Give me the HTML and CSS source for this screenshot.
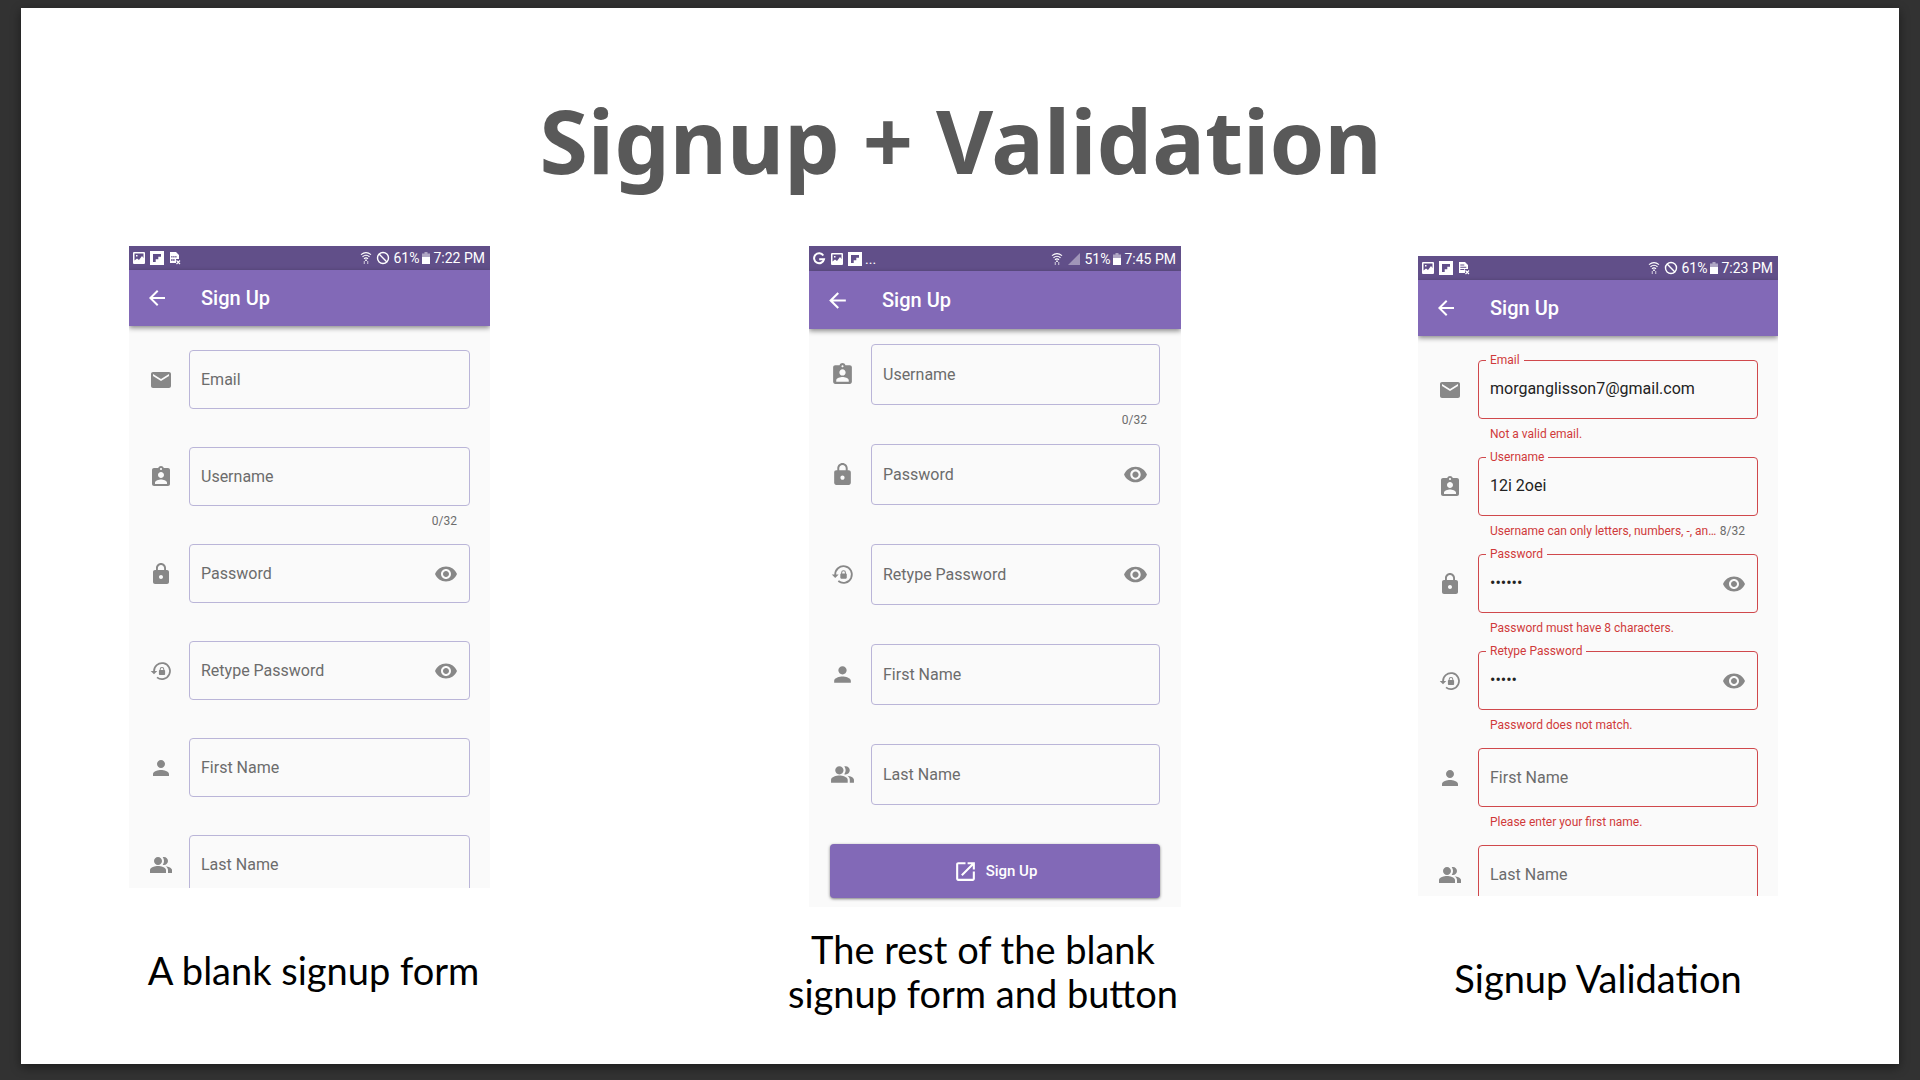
FILE: index.html
```html
<!DOCTYPE html>
<html lang="en">
<head>
<meta charset="utf-8">
<title>Signup + Validation</title>
<link rel="stylesheet" href="styles.css">
</head>
<body>
<svg class="sprite" aria-hidden="true">
  <symbol id="i-back" viewBox="0 0 24 24"><path d="M20 11H7.83l5.59-5.59L12 4l-8 8 8 8 1.41-1.41L7.83 13H20v-2z"/></symbol>
  <symbol id="i-email" viewBox="0 0 24 24"><path d="M20 4H4c-1.100 0-1.990.9-1.990 2L2 18c0 1.100.9 2 2 2h16c1.100 0 2-.9 2-2V6c0-1.100-.9-2-2-2zm0 4l-8 5-8-5V6l8 5 8-5v2z"/></symbol>
  <symbol id="i-badge" viewBox="0 0 24 24"><path d="M19 3h-4.180C14.400 1.840 13.300 1 12 1c-1.300 0-2.400.84-2.820 2H5c-1.100 0-2 .9-2 2v14c0 1.100.9 2 2 2h14c1.100 0 2-.9 2-2V5c0-1.100-.9-2-2-2zm-7 0c.55 0 1 .45 1 1s-.45 1-1 1-1-.45-1-1 .45-1 1-1zm0 4c1.660 0 3 1.340 3 3s-1.340 3-3 3-3-1.340-3-3 1.340-3 3-3zm6 12H6v-1.400c0-2 4-3.100 6-3.100s6 1.100 6 3.100V19z"/></symbol>
  <symbol id="i-lock" viewBox="0 0 24 24"><path d="M18 8h-1V6c0-2.760-2.240-5-5-5S7 3.240 7 6v2H6c-1.100 0-2 .9-2 2v10c0 1.100.9 2 2 2h12c1.100 0 2-.9 2-2V10c0-1.100-.9-2-2-2zm-6 9c-1.100 0-2-.9-2-2s.9-2 2-2 2 .9 2 2-.9 2-2 2zm3.100-9H8.900V6c0-1.710 1.390-3.100 3.100-3.100 1.710 0 3.100 1.390 3.100 3.100v2z"/></symbol>
  <symbol id="i-relock" viewBox="0 0 24 24"><path d="M5 12.500A8 8 0 1 1 8 18.300" fill="none" stroke="currentColor" stroke-width="1.700"/><path d="M1.700 12h6.600L5 15.300zM15.300 11v-.8a2.300 2.300 0 0 0-4.600 0v.8c-.5 0-.8.3-.8.8v3.400c0 .5.3.8.8.8h4.600c.5 0 .8-.3.8-.8v-3.400c0-.5-.3-.8-.8-.8zm-1 0h-2.600v-.8a1.300 1.300 0 0 1 2.600 0z"/></symbol>
  <symbol id="i-person" viewBox="0 0 24 24"><path d="M12 12c2.210 0 4-1.790 4-4s-1.790-4-4-4-4 1.790-4 4 1.790 4 4 4zm0 2c-2.670 0-8 1.340-8 4v2h16v-2c0-2.660-5.330-4-8-4z"/></symbol>
  <symbol id="i-people" viewBox="0 0 24 24"><path d="M16.670 13.130C18.040 14.060 19 15.320 19 17v3h4v-3c0-2.180-3.570-3.470-6.330-3.870zM15 12c2.210 0 4-1.790 4-4s-1.790-4-4-4c-.47 0-.91.1-1.330.24C14.500 5.270 15 6.580 15 8s-.5 2.730-1.330 3.760c.42.14.86.24 1.330.24zM9 12c2.210 0 4-1.790 4-4s-1.790-4-4-4-4 1.790-4 4 1.790 4 4 4zm0 1c-2.670 0-8 1.340-8 4v3h16v-3c0-2.660-5.330-4-8-4z"/></symbol>
  <symbol id="i-eye" viewBox="0 0 24 24"><path d="M12 4.500C7 4.500 2.730 7.610 1 12c1.730 4.390 6 7.500 11 7.500s9.270-3.110 11-7.500c-1.730-4.390-6-7.500-11-7.500zM12 17c-2.760 0-5-2.240-5-5s2.240-5 5-5 5 2.240 5 5-2.240 5-5 5zm0-8c-1.660 0-3 1.340-3 3s1.340 3 3 3 3-1.340 3-3-1.340-3-3-3z"/></symbol>
  <symbol id="i-open" viewBox="0 0 24 24"><path d="M19 19H5V5h7V3H5c-1.110 0-2 .9-2 2v14c0 1.100.89 2 2 2h14c1.100 0 2-.9 2-2v-7h-2v7zM14 3v2h3.590l-9.830 9.830 1.410 1.410L19 6.410V10h2V3h-7z"/></symbol>
  <symbol id="s-picture" viewBox="0 0 14 14"><path fill-rule="evenodd" d="M2 1h10q1 0 1 1v10q0 1-1 1H2q-1 0-1-1V2q0-1 1-1zm.5 1.500v7l2.500-2 2 1.500 3-4 1.500 2V2.500zM4 4h1.500v1.500H4z"/></symbol>
  <symbol id="s-flip" viewBox="0 0 14 14"><path fill-rule="evenodd" d="M0 0h14v14H0zM3 3v8h2.700V8.300h2.600V5.700H11V3z"/></symbol>
  <symbol id="s-sim" viewBox="0 0 14 14"><path fill-rule="evenodd" d="M2 1h6l3 3v4H8v4H2zm1.300 4v1.500h1.200V5zm2 0v1.500h1.200V5zm2 0v1.500h1.200V5zm-4 3v2h1.200V8zm2 0v2h1.200V8z"/><path d="M8.500 9.500l3.500 3.500m0-3.500L8.500 13" stroke="currentColor" stroke-width="1.200"/></symbol>
  <symbol id="s-doc" viewBox="0 0 14 14"><path fill-rule="evenodd" d="M2 1h6l3 3v4H8v4H2zm1.300 2.500v1h4v-1zm0 2.200v1h6v-1zm0 2.200v1h4v-1z"/><path d="M8.500 9.500l3.500 3.500m0-3.500L8.500 13" stroke="currentColor" stroke-width="1.200"/></symbol>
  <symbol id="s-google" viewBox="0 0 14 14"><path d="M11.300 3.500A5 5 0 1 0 12 7.300H7.200" fill="none" stroke="currentColor" stroke-width="2"/></symbol>
  <symbol id="s-wifi" viewBox="0 0 12 14"><g fill="none" stroke="currentColor" stroke-width="1.200"><path d="M1 3.600q5-4 10 0M2.500 5.700q3.500-2.900 7 0M4 7.700q2-1.800 4 0"/></g><path d="M5.200 8.500h1.600V10H5.200z"/><path d="M4.300 10v3M7.700 10v3" stroke="currentColor" stroke-width="1.200" opacity=".6"/></symbol>
  <symbol id="s-none" viewBox="0 0 14 14"><g fill="none" stroke="currentColor" stroke-width="1.400"><circle cx="7" cy="7" r="5.500"/><path d="M3.100 3.100l7.800 7.800"/></g></symbol>
  <symbol id="s-signal" viewBox="0 0 14 14"><path d="M13 1v12H1z" opacity=".4"/></symbol>
  <symbol id="s-battery" viewBox="0 0 8 14"><path d="M2.500 1h3v1.500H8V7H0V2.500h2.500z" opacity=".5"/><path d="M0 6h8v7H0z"/></symbol>
</svg>

<main class="slide">
  <h1 class="title">Signup + Validation</h1>
  <div class="shots">
    <figure class="shot shot-first">
      <section class="phone">
        <div class="status">
          <svg class="glyph"><use href="#s-picture"/></svg><svg class="glyph"><use href="#s-flip"/></svg><svg class="glyph"><use href="#s-sim"/></svg>
          <span class="spacer"></span>
          <svg class="glyph narrow"><use href="#s-wifi"/></svg><svg class="glyph"><use href="#s-none"/></svg><span>61%</span><svg class="glyph battery"><use href="#s-battery"/></svg><span>7:22 PM</span>
        </div>
        <header class="appbar"><button class="icon-button" type="button" aria-label="Back"><svg class="icon"><use href="#i-back"/></svg></button><h2 class="screen-title">Sign Up</h2></header>
        <form class="form">
          <div class="row"><svg class="icon"><use href="#i-email"/></svg><div class="field"><input id="a1" type="email"><label for="a1">Email</label></div></div>
          <div class="row"><svg class="icon"><use href="#i-badge"/></svg><div class="field"><input id="a2" type="text"><label for="a2">Username</label></div><div class="help"><span class="count">0/32</span></div></div>
          <div class="row"><svg class="icon"><use href="#i-lock"/></svg><div class="field"><input id="a3" type="password"><label for="a3">Password</label><button class="icon-button eye" type="button" aria-label="Show password"><svg class="icon"><use href="#i-eye"/></svg></button></div></div>
          <div class="row"><svg class="icon"><use href="#i-relock"/></svg><div class="field"><input id="a4" type="password"><label for="a4">Retype Password</label><button class="icon-button eye" type="button" aria-label="Show password"><svg class="icon"><use href="#i-eye"/></svg></button></div></div>
          <div class="row"><svg class="icon"><use href="#i-person"/></svg><div class="field"><input id="a5" type="text"><label for="a5">First Name</label></div></div>
          <div class="row"><svg class="icon"><use href="#i-people"/></svg><div class="field"><input id="a6" type="text"><label for="a6">Last Name</label></div></div>
        </form>
      </section>
      <figcaption class="caption">A blank signup form</figcaption>
    </figure>

    <figure class="shot shot-second">
      <section class="phone phone-large">
        <div class="status">
          <svg class="glyph"><use href="#s-google"/></svg><svg class="glyph"><use href="#s-picture"/></svg><svg class="glyph"><use href="#s-flip"/></svg><span>...</span>
          <span class="spacer"></span>
          <svg class="glyph narrow"><use href="#s-wifi"/></svg><svg class="glyph"><use href="#s-signal"/></svg><span>51%</span><svg class="glyph battery"><use href="#s-battery"/></svg><span>7:45 PM</span>
        </div>
        <header class="appbar"><button class="icon-button" type="button" aria-label="Back"><svg class="icon"><use href="#i-back"/></svg></button><h2 class="screen-title">Sign Up</h2></header>
        <form class="form">
          <div class="row"><svg class="icon"><use href="#i-badge"/></svg><div class="field"><input id="b1" type="text"><label for="b1">Username</label></div><div class="help"><span class="count">0/32</span></div></div>
          <div class="row"><svg class="icon"><use href="#i-lock"/></svg><div class="field"><input id="b2" type="password"><label for="b2">Password</label><button class="icon-button eye" type="button" aria-label="Show password"><svg class="icon"><use href="#i-eye"/></svg></button></div></div>
          <div class="row"><svg class="icon"><use href="#i-relock"/></svg><div class="field"><input id="b3" type="password"><label for="b3">Retype Password</label><button class="icon-button eye" type="button" aria-label="Show password"><svg class="icon"><use href="#i-eye"/></svg></button></div></div>
          <div class="row"><svg class="icon"><use href="#i-person"/></svg><div class="field"><input id="b4" type="text"><label for="b4">First Name</label></div></div>
          <div class="row"><svg class="icon"><use href="#i-people"/></svg><div class="field"><input id="b5" type="text"><label for="b5">Last Name</label></div></div>
          <button class="submit" type="button"><svg class="icon"><use href="#i-open"/></svg>Sign Up</button>
        </form>
      </section>
      <figcaption class="caption">The rest of the blank signup form and button</figcaption>
    </figure>

    <figure class="shot shot-third">
      <section class="phone">
        <div class="status">
          <svg class="glyph"><use href="#s-picture"/></svg><svg class="glyph"><use href="#s-flip"/></svg><svg class="glyph"><use href="#s-doc"/></svg>
          <span class="spacer"></span>
          <svg class="glyph narrow"><use href="#s-wifi"/></svg><svg class="glyph"><use href="#s-none"/></svg><span>61%</span><svg class="glyph battery"><use href="#s-battery"/></svg><span>7:23 PM</span>
        </div>
        <header class="appbar"><button class="icon-button" type="button" aria-label="Back"><svg class="icon"><use href="#i-back"/></svg></button><h2 class="screen-title">Sign Up</h2></header>
        <form class="form invalid">
          <div class="row"><svg class="icon"><use href="#i-email"/></svg><div class="field filled"><input id="c1" type="text" value="morganglisson7@gmail.com"><label for="c1">Email</label></div><div class="help"><span>Not a valid email.</span></div></div>
          <div class="row"><svg class="icon"><use href="#i-badge"/></svg><div class="field filled"><input id="c2" type="text" value="12i 2oei"><label for="c2">Username</label></div><div class="help"><span>Username can only letters, numbers, -, an…</span><span class="count">8/32</span></div></div>
          <div class="row"><svg class="icon"><use href="#i-lock"/></svg><div class="field filled"><input id="c3" type="password" value="secret"><label for="c3">Password</label><button class="icon-button eye" type="button" aria-label="Show password"><svg class="icon"><use href="#i-eye"/></svg></button></div><div class="help"><span>Password must have 8 characters.</span></div></div>
          <div class="row"><svg class="icon"><use href="#i-relock"/></svg><div class="field filled"><input id="c4" type="password" value="secre"><label for="c4">Retype Password</label><button class="icon-button eye" type="button" aria-label="Show password"><svg class="icon"><use href="#i-eye"/></svg></button></div><div class="help"><span>Password does not match.</span></div></div>
          <div class="row"><svg class="icon"><use href="#i-person"/></svg><div class="field"><input id="c5" type="text"><label for="c5">First Name</label></div><div class="help"><span>Please enter your first name.</span></div></div>
          <div class="row"><svg class="icon"><use href="#i-people"/></svg><div class="field"><input id="c6" type="text"><label for="c6">Last Name</label></div></div>
        </form>
      </section>
      <figcaption class="caption">Signup Validation</figcaption>
    </figure>
  </div>
</main>
</body>
</html>
```
FILE: styles.css
```css
* { box-sizing: border-box; }

body {
  margin: 0;
  min-height: 100vh;
  padding: 8px 21px 16px;
  display: flex;
  background: #323232;
  font-family: Roboto, sans-serif;
}

.sprite { display: none; }

.slide {
  flex: 1;
  padding: 72px 121px 0 108px;
  background: #fff;
  box-shadow: 0 3px 10px rgba(0, 0, 0, 0.45);
}

.title {
  margin: 0 0 46px 14px;
  font: bold 88px/120px "Noto Sans", "Open Sans", sans-serif;
  color: #595959;
  text-align: center;
}

.shots {
  display: grid;
  grid-template-columns: 361fr 319fr 372fr 237fr 360fr;
  align-items: start;
}

.shot { margin: 0; min-width: 0; }
.shot-first { grid-column: 1; }
.shot-second { grid-column: 3; }
.shot-third { grid-column: 5; padding-top: 10px; }

.caption {
  margin: 60px 0 0;
  font: 38px/44px Lato, sans-serif;
  color: #000;
  text-align: center;
}
.shot-first .caption { padding-left: 8px; }
.shot-second .caption { margin: 20px 0 0 -24px; }

/* Phone screen */
.phone {
  --status: 24px;
  --bar: 56px;
  --top: 24px;
  --pad: 20px;
  --icon: 24px;
  --input: 59px;
  --row: 97px;
  aspect-ratio: 9 / 16;
  overflow: hidden;
  background: #fafafa;
}
.phone-large {
  --status: 25px;
  --bar: 58px;
  --top: 15px;
  --pad: 21px;
  --icon: 25px;
  --input: 61px;
  --row: 100px;
}

.status {
  display: flex;
  align-items: center;
  gap: 3px;
  height: var(--status);
  padding: 0 5px 0 3px;
  background: #614f89;
  color: #fff;
  font-size: 14px;
}
.spacer { flex: 1; }
.glyph { width: 14px; height: 14px; fill: currentColor; }
.glyph + .glyph { margin-left: 1px; }
.narrow { width: 12px; }
.battery { width: 8px; }

.appbar {
  display: flex;
  align-items: center;
  gap: 32px;
  height: var(--bar);
  padding: 0 16px;
  background: #8269b7;
  color: #fff;
  box-shadow: 0 2px 5px rgba(0, 0, 0, 0.45);
}
.screen-title { margin: 0; font-size: 20px; font-weight: 500; }

.icon { display: block; width: var(--icon); height: var(--icon); fill: currentColor; }
.icon-button { padding: 0; border: 0; background: none; color: inherit; }

/* Form */
.form { padding: var(--top) var(--pad) 0; color: #888; }

.row {
  display: grid;
  grid-template-columns: var(--icon) 1fr;
  grid-template-rows: var(--input) 1fr;
  column-gap: 16px;
  align-items: center;
  height: var(--row);
}

.field { display: grid; align-items: center; }
.field > * { grid-area: 1 / 1; }
.field input {
  width: 100%;
  height: var(--input);
  padding: 0 11px 2px;
  border: 1px solid #bab5d8;
  border-radius: 4px;
  outline: 0;
  background: transparent;
  color: #222;
  font: 16px Roboto, sans-serif;
}
.field label {
  justify-self: start;
  margin-left: 12px;
  color: #6c6c6c;
  font-size: 16px;
}
.eye { justify-self: end; margin-right: 12px; }

.help {
  grid-column: 2;
  align-self: start;
  display: flex;
  padding: 8px 13px 0 12px;
  font-size: 12px;
  line-height: 14px;
  color: #d03a3a;
  white-space: nowrap;
}
.count { margin-left: auto; color: #6c6c6c; }

.invalid input { border-color: #d0484c; }
.filled label {
  align-self: start;
  margin: -7px 0 0 8px;
  padding: 0 4px;
  background: #fafafa;
  color: #d03a3a;
  font-size: 12px;
  line-height: 14px;
}

.submit {
  display: flex;
  align-items: center;
  justify-content: center;
  gap: 8px;
  width: 100%;
  height: 54px;
  border: 0;
  border-radius: 4px;
  background: #8269b7;
  box-shadow: 0 1px 3px rgba(0, 0, 0, 0.5);
  color: #fff;
  font: 500 15px Roboto, sans-serif;
}
```
